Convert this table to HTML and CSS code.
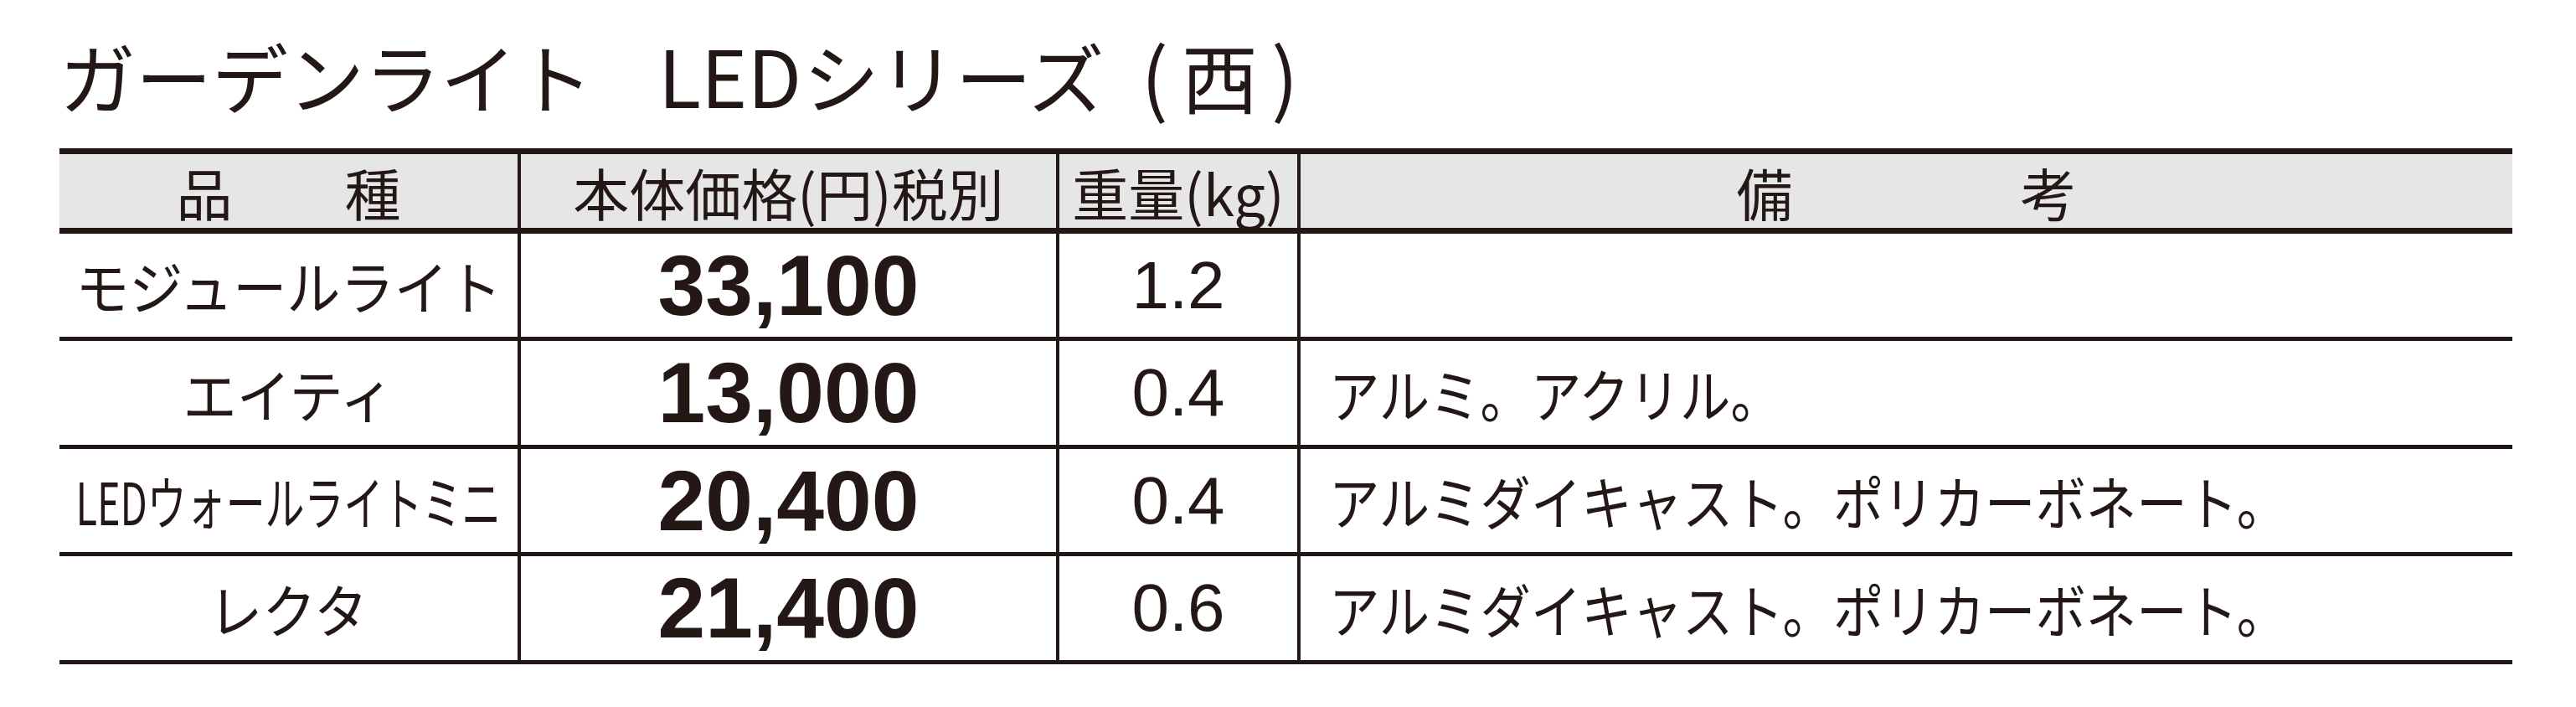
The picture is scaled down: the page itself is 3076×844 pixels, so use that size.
FILE: index.html
```html
<!DOCTYPE html>
<html lang="ja">
<head>
<meta charset="utf-8">
<title>ガーデンライト LEDシリーズ（西）</title>
<link rel="stylesheet" href="styles.css">
</head>
<body>
<div class="page">
  <h1 class="title"><span class="t-kana">ガーデンライト</span><span class="t-led">LED</span><span class="t-series">シリーズ</span><span class="t-paren">(<span class="t-west">西</span>)</span></h1>
  <div class="table">
    <div class="cell head c1"><span class="h-sp">品</span><span class="h-sp">種</span></div>
    <div class="cell head"><span class="h-txt">本体価格(円)税別</span></div>
    <div class="cell head"><span class="h-txt">重量(kg)</span></div>
    <div class="cell head c4"><span class="h-sp">備</span><span class="h-sp">考</span></div>

    <div class="cell c1"><span class="name">モジュールライト</span></div>
    <div class="cell"><span class="price">33,100</span></div>
    <div class="cell"><span class="weight">1.2</span></div>
    <div class="cell note"><span class="note-txt"></span></div>

    <div class="cell c1"><span class="name">エイティ</span></div>
    <div class="cell"><span class="price">13,000</span></div>
    <div class="cell"><span class="weight">0.4</span></div>
    <div class="cell note"><span class="note-txt">アルミ。アクリル。</span></div>

    <div class="cell c1"><span class="name name-narrow">LEDウォールライトミニ</span></div>
    <div class="cell"><span class="price">20,400</span></div>
    <div class="cell"><span class="weight">0.4</span></div>
    <div class="cell note"><span class="note-txt">アルミダイキャスト。ポリカーボネート。</span></div>

    <div class="cell c1"><span class="name">レクタ</span></div>
    <div class="cell"><span class="price">21,400</span></div>
    <div class="cell"><span class="weight">0.6</span></div>
    <div class="cell note"><span class="note-txt">アルミダイキャスト。ポリカーボネート。</span></div>
  </div>
</div>
</body>
</html>
```

FILE: styles.css
```css
html, body {
  margin: 0;
  padding: 0;
  background: #ffffff;
}

body {
  color: #231815;
  font-family: "Noto Sans CJK JP", "Noto Sans", sans-serif;
}

.page {
  padding-left: 71px;
  width: 2929px;
}

.title {
  margin: 0;
  height: 177px;
  box-sizing: border-box;
  padding-top: 42px;
  font-size: 91px;
  line-height: 92px;
  font-weight: normal;
  white-space: nowrap;
}

.t-led {
  font-size: 94px;
  margin-left: 78px;
}

.t-series {
  margin-left: 2px;
}

.t-paren {
  margin-left: 44px;
  font-size: 96px;
}

.t-west {
  font-size: 91px;
  margin: 0 16px;
}

.table {
  display: grid;
  grid-template-columns: 547px 643px 288px 1451px;
  grid-template-rows: 95px 128px 129px 128px 129px;
  border-top: 7px solid #231815;
}

.cell {
  box-sizing: border-box;
  display: flex;
  align-items: center;
  justify-content: center;
  border-left: 4px solid #231815;
  border-bottom: 5px solid #231815;
  line-height: 1;
  white-space: nowrap;
}

.cell.c1 {
  border-left: none;
}

.cell.head {
  background: #e6e6e6;
  border-bottom-width: 7px;
  font-size: 67px;
}

.head.c1 {
  gap: 134px;
}

.head.c4 {
  gap: 272px;
}

.h-sp, .h-txt {
  display: inline-block;
}

.name {
  display: inline-block;
  font-size: 69px;
  transform: scaleX(0.93);
}

.name-narrow {
  transform: scaleX(0.68);
}

.price {
  font-family: "Liberation Sans", Arial, sans-serif;
  font-weight: bold;
  font-size: 102px;
}

.weight {
  font-family: "Liberation Sans", Arial, sans-serif;
  font-size: 80px;
}

.cell.note {
  justify-content: flex-start;
  padding-left: 34px;
}

.note-txt {
  display: inline-block;
  font-size: 69px;
  transform: scaleX(0.875);
  transform-origin: left center;
}
```
